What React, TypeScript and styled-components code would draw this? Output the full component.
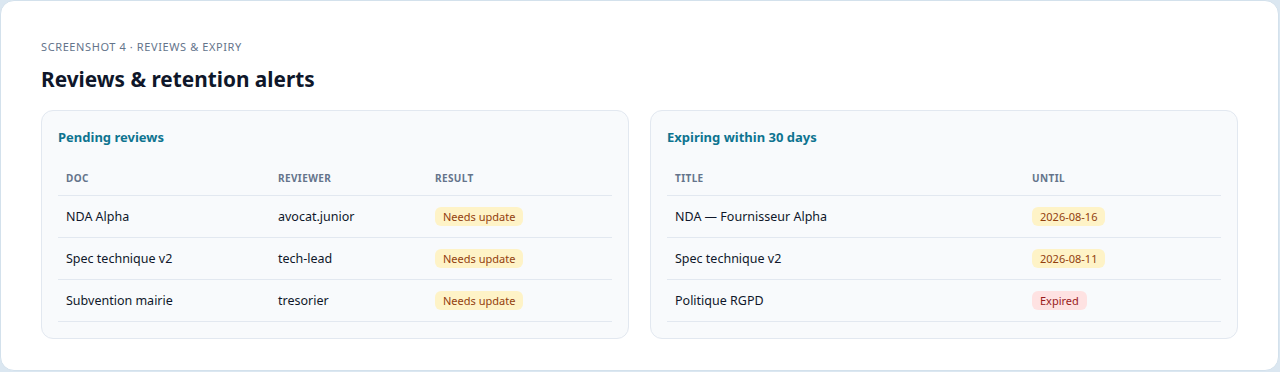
import React from 'react';
import styled, { createGlobalStyle } from 'styled-components';

const GlobalStyle = createGlobalStyle`
  html, body {
    margin: 0;
    padding: 0;
    background: #dbe7f1;
  }
  body {
    font-family: "Noto Sans", "Open Sans", sans-serif;
    color: #0f172a;
  }
`;

const Card = styled.div`
  box-sizing: border-box;
  width: 1279px;
  height: 371px;
  background: #ffffff;
  border: 1px solid #d3e1ec;
  border-radius: 14px;
  padding: 38px 40px 0 40px;
`;

const Eyebrow = styled.div`
  font-size: 11px;
  letter-spacing: 0.6px;
  text-transform: uppercase;
  color: #64748b;
  line-height: 16px;
`;

const Title = styled.h1`
  margin: 10px 0 0 0;
  font-size: 20.8px;
  font-weight: 700;
  line-height: 28px;
  color: #0f172a;
`;

const Grid = styled.div`
  display: grid;
  grid-template-columns: 1fr 1fr;
  gap: 21px;
  margin-top: 17px;
`;

const Panel = styled.section`
  box-sizing: border-box;
  height: 229px;
  background: #f8fafc;
  border: 1px solid #e2e8f0;
  border-radius: 12px;
  padding: 16px;
`;

const PanelTitle = styled.h2`
  margin: 0;
  font-size: 13px;
  font-weight: 700;
  line-height: 20px;
  color: #0e7490;
`;

const Table = styled.table`
  width: 100%;
  margin-top: 10px;
  border-collapse: collapse;
  table-layout: fixed;
`;

const Th = styled.th<{ $w?: number }>`
  box-sizing: border-box;
  ${({ $w }) => ($w ? `width: ${$w}px;` : '')}
  text-align: left;
  font-size: 10px;
  font-weight: 700;
  letter-spacing: 0.4px;
  text-transform: uppercase;
  color: #64748b;
  padding: 12px 8px 7px 8px;
  height: 38px;
  border-bottom: 1px solid #e2e8f0;
`;

const Td = styled.td`
  font-size: 12.5px;
  color: #0f172a;
  padding: 0 8px;
  height: 41px;
  border-bottom: 1px solid #e2e8f0;
`;

const Badge = styled.span<{ $tone: 'warn' | 'danger' }>`
  display: inline-block;
  font-size: 11px;
  line-height: 19px;
  padding: 0 8px;
  border-radius: 6px;
  background: ${({ $tone }) => ($tone === 'danger' ? '#fee2e2' : '#fef3c7')};
  color: ${({ $tone }) => ($tone === 'danger' ? '#991b1b' : '#92400e')};
`;

const reviews = [
  { doc: 'NDA Alpha', reviewer: 'avocat.junior', result: 'Needs update' },
  { doc: 'Spec technique v2', reviewer: 'tech-lead', result: 'Needs update' },
  { doc: 'Subvention mairie', reviewer: 'tresorier', result: 'Needs update' },
];

const expiring: { title: string; until: string; tone: 'warn' | 'danger' }[] = [
  { title: 'NDA — Fournisseur Alpha', until: '2026-08-16', tone: 'warn' },
  { title: 'Spec technique v2', until: '2026-08-11', tone: 'warn' },
  { title: 'Politique RGPD', until: 'Expired', tone: 'danger' },
];

export default function App() {
  return (
    <>
      <GlobalStyle />
      <Card>
        <Eyebrow>Screenshot 4 · Reviews &amp; expiry</Eyebrow>
        <Title>Reviews &amp; retention alerts</Title>
        <Grid>
          <Panel>
            <PanelTitle>Pending reviews</PanelTitle>
            <Table>
              <thead>
                <tr>
                  <Th $w={212}>Doc</Th>
                  <Th $w={157}>Reviewer</Th>
                  <Th>Result</Th>
                </tr>
              </thead>
              <tbody>
                {reviews.map((r) => (
                  <tr key={r.doc}>
                    <Td>{r.doc}</Td>
                    <Td>{r.reviewer}</Td>
                    <Td>
                      <Badge $tone="warn">{r.result}</Badge>
                    </Td>
                  </tr>
                ))}
              </tbody>
            </Table>
          </Panel>
          <Panel>
            <PanelTitle>Expiring within 30 days</PanelTitle>
            <Table>
              <thead>
                <tr>
                  <Th $w={357}>Title</Th>
                  <Th>Until</Th>
                </tr>
              </thead>
              <tbody>
                {expiring.map((e) => (
                  <tr key={e.title}>
                    <Td>{e.title}</Td>
                    <Td>
                      <Badge $tone={e.tone}>{e.until}</Badge>
                    </Td>
                  </tr>
                ))}
              </tbody>
            </Table>
          </Panel>
        </Grid>
      </Card>
    </>
  );
}
